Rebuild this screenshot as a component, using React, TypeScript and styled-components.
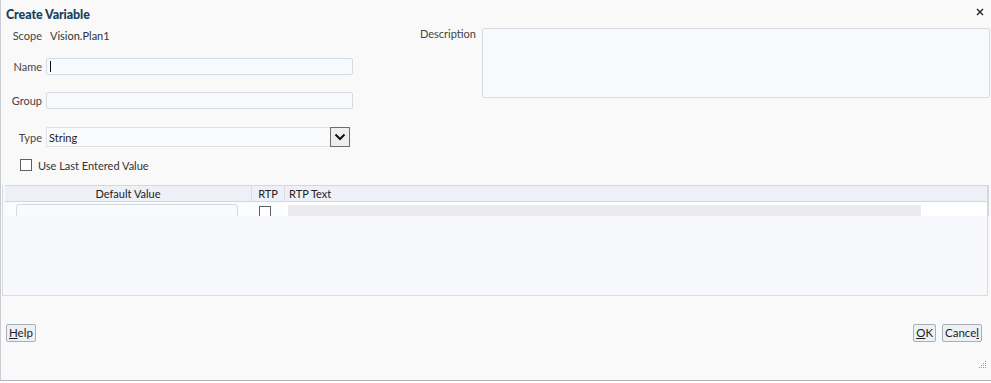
import { createGlobalStyle, styled } from 'styled-components'

const GlobalStyle = createGlobalStyle`
  html, body {
    margin: 0;
    padding: 0;
    background: #ffffff;
  }
  body {
    font-family: Lato, "Liberation Sans", sans-serif;
    font-size: 11px;
    color: #333;
  }
`;

const Dialog = styled.div`
  width: 991px;
  height: 381px;
  box-sizing: border-box;
  background: #f9f9f9;
  border-left: 1px solid #c9cdd3;
  border-bottom: 1px solid #aeb3ba;
  display: flex;
  flex-direction: column;
  position: relative;
`;

const TitleBar = styled.div`
  height: 26px;
  display: flex;
  align-items: center;
  justify-content: space-between;
  padding: 0 5px 2px 5px;
  box-sizing: border-box;
`;

const Title = styled.h1`
  margin: 4px 0 0 0;
  font-size: 12.5px;
  font-weight: 900;
  color: #183f5c;
  letter-spacing: -0.1px;
`;

const CloseButton = styled.button`
  border: none;
  background: none;
  padding: 0;
  width: 10px;
  height: 10px;
  display: flex;
  align-items: center;
  justify-content: center;
  margin-right: 1px;
`;

const FormArea = styled.div`
  display: grid;
  grid-template-columns: 355px 1fr;
  height: 159px;
`;

const LeftCol = styled.div`
  display: flex;
  flex-direction: column;
`;

const FieldRow = styled.div<{ $top: number; $h: number }>`
  display: grid;
  grid-template-columns: 41px 1fr;
  column-gap: 4px;
  align-items: center;
  margin-top: ${p => p.$top}px;
  height: ${p => p.$h}px;
`;

const Label = styled.label`
  text-align: right;
  color: #444;
  white-space: nowrap;
`;

const ReadValue = styled.span`
  padding-left: 4px;
  color: #333;
`;

const TextBox = styled.div<{ $w: number }>`
  width: ${p => p.$w}px;
  height: 17px;
  box-sizing: border-box;
  border: 1px solid #d6dbe1;
  border-radius: 2px;
  background: #f8fbfd;
  display: flex;
  align-items: center;
  padding-left: 3px;
`;

const Caret = styled.span`
  width: 1px;
  height: 11px;
  background: #111;
`;

const Select = styled.div`
  width: 304px;
  height: 20px;
  box-sizing: border-box;
  border: 1px solid #dde1e6;
  background: #fafbfc;
  display: flex;
  align-items: center;
  justify-content: space-between;
  color: #222;
`;

const SelectText = styled.span`
  padding-left: 2px;
`;

const SelectButton = styled.span`
  width: 20px;
  height: 20px;
  box-sizing: border-box;
  margin-right: -1px;
  border: 1px solid #6d6d6d;
  background: #eeeeee;
  display: flex;
  align-items: center;
  justify-content: center;
`;

const CheckRow = styled.div`
  display: flex;
  align-items: center;
  gap: 6px;
  margin-top: 12px;
  padding-left: 19px;
  height: 12px;
`;

const Check = styled.span`
  width: 12px;
  height: 12px;
  box-sizing: border-box;
  border: 1px solid #5f5f5f;
  background: #fff;
  display: inline-block;
`;

const RightCol = styled.div`
  display: grid;
  grid-template-columns: 120px 1fr;
  column-gap: 6px;
  align-items: start;
  padding-top: 2px;
`;

const DescLabel = styled(Label)`
  margin-top: -1px;
`;

const TextArea = styled.div`
  height: 70px;
  box-sizing: border-box;
  border: 1px solid #d6dbe1;
  border-radius: 2px;
  background: #f8fbfd;
  margin-right: 1px;
`;

const TablePanel = styled.div`
  margin: 0 3px 0 1px;
  height: 111px;
  box-sizing: border-box;
  border: 1px solid #d9dce0;
  border-top: none;
  background: #f7f8fb;
  position: relative;
`;

const TableGrid = styled.div`
  display: grid;
  grid-template-columns: 246px 33px 1fr;
  margin: 0 -2px 0 2px;
  border-right: 2px solid #d3d7de;
`;

const HeadCell = styled.div<{ $align?: string }>`
  height: 17px;
  box-sizing: border-box;
  background: #eef0f8;
  border-top: 1px solid #d3d7de;
  border-bottom: 1px solid #d3d7de;
  border-left: 1px solid #d9dce4;
  display: flex;
  align-items: center;
  justify-content: ${p => p.$align || 'flex-start'};
  padding: 0 4px;
  color: #222;
  &:first-child {
    border-left: none;
  }
`;

const BodyCell = styled.div<{ $bg?: string }>`
  height: 14px;
  overflow: hidden;
  background: ${p => p.$bg || '#fbfcfd'};
  padding-top: 2px;
  box-sizing: border-box;
  display: flex;
`;

const CellInput = styled.div`
  margin-left: 11px;
  width: 222px;
  height: 20px;
  box-sizing: border-box;
  border: 1px solid #d6dbe1;
  border-radius: 3px;
  background: #f8fbfd;
`;

const CellCheck = styled(Check)`
  margin: 2px 0 0 8px;
`;

const RtpBar = styled.div`
  margin-left: 4px;
  margin-top: 1px;
  width: 633px;
  height: 14px;
  background: #ebebed;
`;

const Footer = styled.div`
  flex: 1;
  display: flex;
  justify-content: space-between;
  align-items: flex-start;
  padding: 28px 9px 0 5px;
`;

const ButtonGroup = styled.div`
  display: flex;
  gap: 6px;
`;

const Button = styled.button`
  height: 18px;
  padding: 0 2px;
  font-family: inherit;
  font-size: 11.5px;
  color: #222;
  background: #eef1f4;
  border: 1px solid #a7afb8;
  border-radius: 2px;
  line-height: 16px;
  u {
    text-decoration: underline;
  }
`;

const Grip = styled.svg`
  position: absolute;
  right: 4px;
  bottom: 11px;
`;

const CloseIcon = () => (
  <svg width="8" height="8" viewBox="0 0 8 8">
    <path d="M1 1 L7 7 M7 1 L1 7" stroke="#222" strokeWidth="1.4" />
  </svg>
);

const Chevron = () => (
  <svg width="12" height="8" viewBox="0 0 12 8">
    <path d="M1.5 1.5 L6 6 L10.5 1.5" stroke="#111" strokeWidth="2" fill="none" />
  </svg>
);

const gripDots = [
  [8, 0], [6, 2], [8, 2], [4, 4], [6, 4], [8, 4], [2, 6], [4, 6], [6, 6], [8, 6],
];

export default function App() {
  return (
    <>
      <GlobalStyle />
      <Dialog>
        <TitleBar>
          <Title>Create Variable</Title>
          <CloseButton aria-label="Close"><CloseIcon /></CloseButton>
        </TitleBar>
        <FormArea>
          <LeftCol>
            <FieldRow $top={1} $h={16}>
              <Label>Scope</Label>
              <ReadValue>Vision.Plan1</ReadValue>
            </FieldRow>
            <FieldRow $top={15} $h={17}>
              <Label>Name</Label>
              <TextBox $w={307}><Caret /></TextBox>
            </FieldRow>
            <FieldRow $top={17} $h={17}>
              <Label>Group</Label>
              <TextBox $w={307} />
            </FieldRow>
            <FieldRow $top={18} $h={20}>
              <Label>Type</Label>
              <Select>
                <SelectText>String</SelectText>
                <SelectButton><Chevron /></SelectButton>
              </Select>
            </FieldRow>
            <CheckRow>
              <Check />
              <span>Use Last Entered Value</span>
            </CheckRow>
          </LeftCol>
          <RightCol>
            <DescLabel>Description</DescLabel>
            <TextArea />
          </RightCol>
        </FormArea>
        <TablePanel>
          <TableGrid>
            <HeadCell $align="center">Default Value</HeadCell>
            <HeadCell $align="center">RTP</HeadCell>
            <HeadCell>RTP Text</HeadCell>
            <BodyCell><CellInput /></BodyCell>
            <BodyCell><CellCheck /></BodyCell>
            <BodyCell $bg="#ffffff"><RtpBar /></BodyCell>
          </TableGrid>
        </TablePanel>
        <Footer>
          <Button><u>H</u>elp</Button>
          <ButtonGroup>
            <Button><u>O</u>K</Button>
            <Button>Cance<u>l</u></Button>
          </ButtonGroup>
        </Footer>
        <Grip width="10" height="8" viewBox="0 0 10 8">
          {gripDots.map(([x, y]) => (
            <rect key={`${x}-${y}`} x={x} y={y} width="1" height="1" fill="#9a9a9a" />
          ))}
        </Grip>
      </Dialog>
    </>
  );
}
